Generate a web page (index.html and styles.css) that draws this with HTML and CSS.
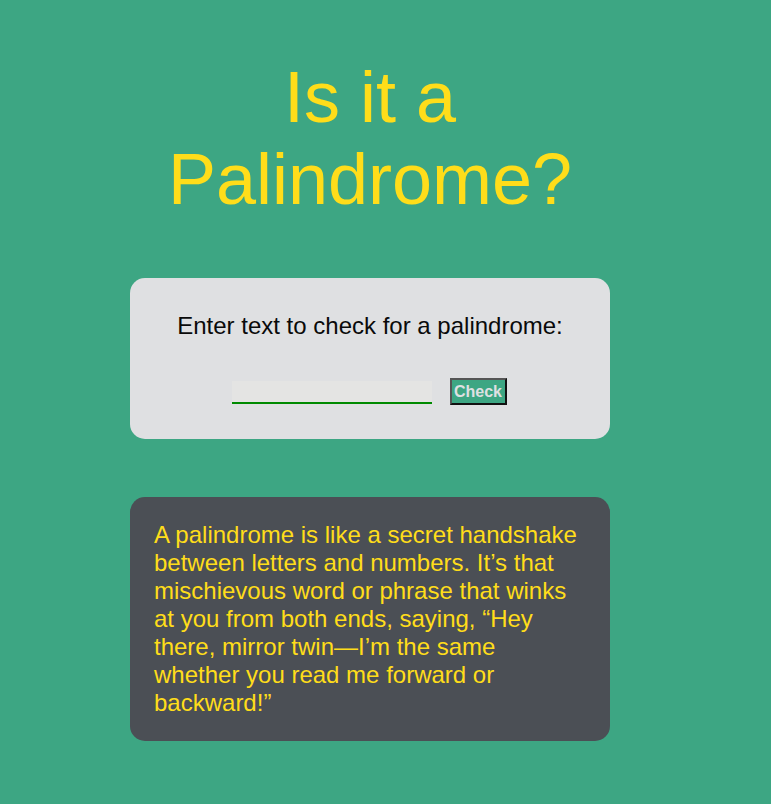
FILE: index.html
```html
<!DOCTYPE html>
<html lang="en">
<head>
<meta charset="utf-8">
<title>Palindrome Checker</title>
<link rel="stylesheet" href="styles.css">
</head>
<body>
<main class="page">
  <h1 class="title">Is it a Palindrome?</h1>
  <section class="checker">
    <label class="prompt" for="text-input">Enter text to check for a palindrome:</label>
    <div class="controls">
      <input id="text-input" class="text-input" type="text">
      <button class="check-btn" type="button">Check</button>
    </div>
  </section>
  <section class="info">
    <p class="info-text">A palindrome is like a secret handshake between letters and numbers. It’s that mischievous word or phrase that winks at you from both ends, saying, “Hey there, mirror twin—I’m the same whether you read me forward or backward!”</p>
  </section>
</main>
</body>
</html>
```
FILE: styles.css
```css
html, body {
  margin: 0;
  padding: 0;
}
body {
  background: #3da683;
  font-family: "Liberation Sans", Arial, sans-serif;
  min-height: 804px;
}
.page {
  width: 480px;
  margin-left: 130px;
  padding-top: 56px;
  display: flex;
  flex-direction: column;
}
.title {
  margin: 0 0 58px;
  font-size: 72px;
  font-weight: 400;
  line-height: 82px;
  text-align: center;
  color: #ffdd1a;
}
.checker {
  background: #dfe0e2;
  border-radius: 15px;
  height: 161px;
  box-sizing: border-box;
  padding-top: 34px;
  display: flex;
  flex-direction: column;
  align-items: center;
}
.prompt {
  font-size: 24px;
  line-height: 28px;
  color: #0a0a0a;
}
.controls {
  margin-top: 38px;
  display: flex;
  align-items: center;
  gap: 18px;
  padding-right: 2px;
}
.text-input {
  width: 200px;
  height: 23px;
  box-sizing: border-box;
  border: none;
  border-bottom: 2px solid #008a00;
  background: #e4e4e3;
  outline: none;
  padding: 0;
  margin-top: 2px;
}
.check-btn {
  width: 57px;
  height: 27px;
  box-sizing: border-box;
  background: #3da683;
  border: 2px solid #111;
  border-top-color: #555;
  border-left-color: #555;
  color: #dfe0e2;
  font-family: "Liberation Sans", Arial, sans-serif;
  font-weight: 700;
  font-size: 16px;
  padding: 0;
  line-height: 20px;
}
.info {
  margin-top: 58px;
  background: #4b4f55;
  border-radius: 15px;
  height: 244px;
  box-sizing: border-box;
  padding: 24px 24px;
}
.info-text {
  margin: 0;
  font-size: 24px;
  line-height: 28px;
  color: #ffdd1a;
}
```
